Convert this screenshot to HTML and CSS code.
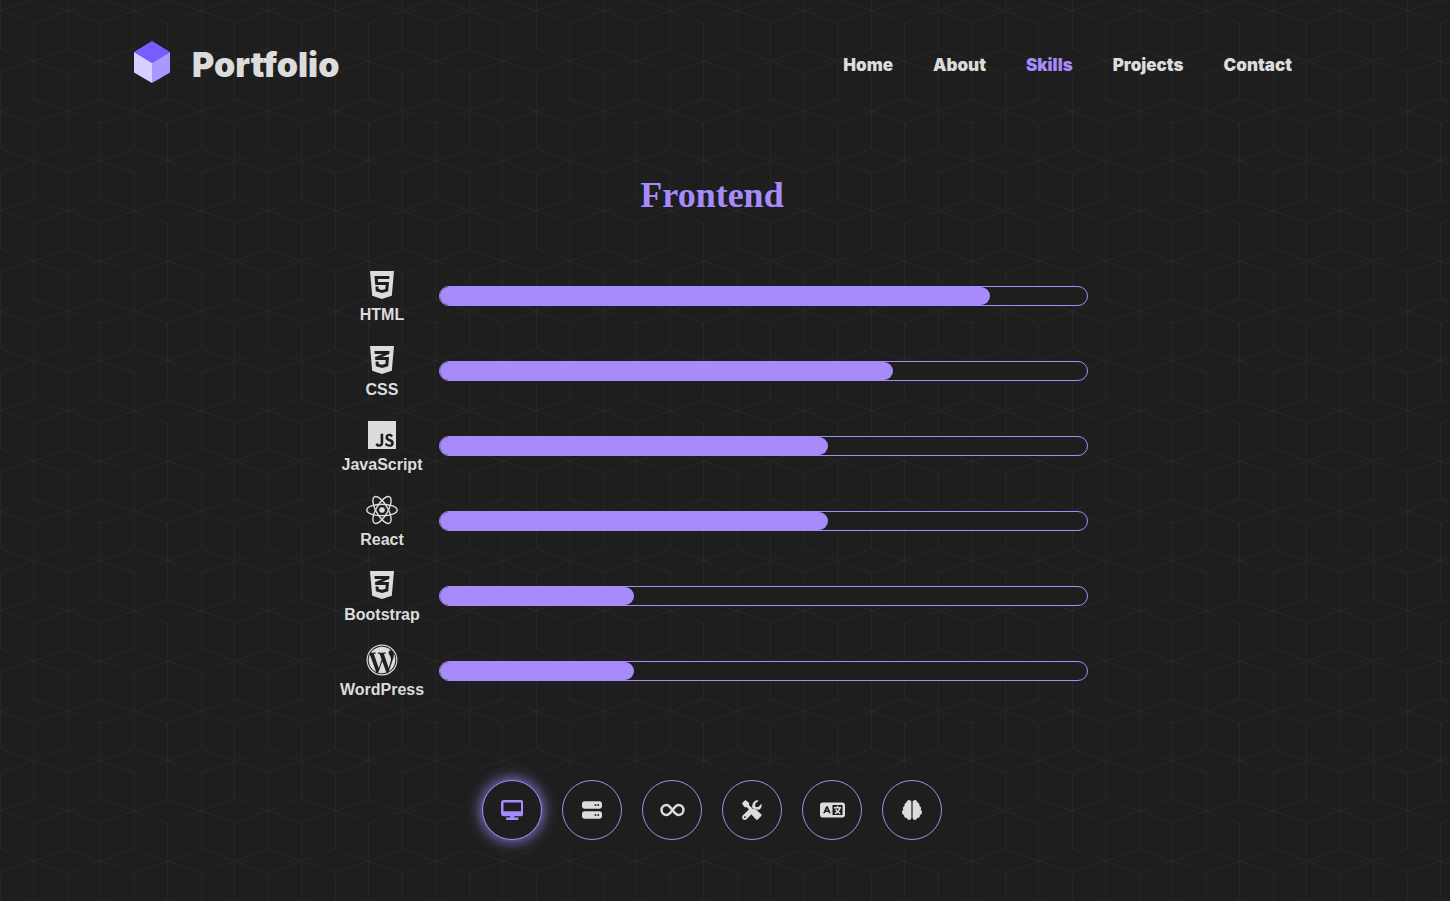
FILE: index.html
```html
<!DOCTYPE html>
<html lang="en">
<head>
<meta charset="utf-8">
<meta name="viewport" content="width=device-width, initial-scale=1">
<title>Portfolio</title>
<link rel="stylesheet" href="styles.css">
</head>
<body>
<header class="header">
  <a class="brand" href="#">
    <svg class="brand-mark" viewBox="0 0 36 42" aria-hidden="true">
      <path fill="#775dff" d="M18 0 36 11 18 22 0 11z"/>
      <path fill="#d8ceff" d="M0 11 18 22V42L0 31.500z"/>
      <path fill="#a998ff" d="M36 11 18 22V42L36 31.500z"/>
    </svg>
    <span>Portfolio</span>
  </a>
  <nav class="nav">
    <a href="#home">Home</a>
    <a href="#about">About</a>
    <a class="active" href="#skills">Skills</a>
    <a href="#projects">Projects</a>
    <a href="#contact">Contact</a>
  </nav>
</header>
<main class="main">
  <h1 class="title">Frontend</h1>
  <ul class="skills">
    <li class="skill">
      <div class="label"><svg viewBox="0 0 384 512" aria-hidden="true"><path d="M0 32l34.9 395.8L191.500 480l157.600-52.200L384 32H0zm308.200 127.900H124.400l4.100 49.400h175.600l-13.600 148.400-97.900 27v.3h-1.100l-98.700-27.300-6-75.800h47.700L138 320l53.500 14.500 53.700-14.500 6-62.200H84.300L71.500 112.200h241.100l-4.400 47.700z"/></svg><span>HTML</span></div>
      <div class="bar"><div class="fill" style="width:85%"></div></div>
    </li>
    <li class="skill">
      <div class="label"><svg viewBox="0 0 384 512" aria-hidden="true"><path d="M0 32l34.900 395.800L192 480l157.100-52.200L384 32H0zm313.100 80l-4.800 47.300L193 208.600l-.3.1h111.500l-12.800 146.600-98.200 28.700-98.800-29.200-6.400-73.900h48.900l3.200 38.300 52.600 13.300 54.700-15.400 3.700-61.600-166.300-.5v-.1l-.2.1-3.600-46.300L193.100 162l6.500-2.700H76.700L70.900 112h242.200z"/></svg><span>CSS</span></div>
      <div class="bar"><div class="fill" style="width:70%"></div></div>
    </li>
    <li class="skill">
      <div class="label"><svg viewBox="0 0 448 512" aria-hidden="true"><path d="M0 32v448h448V32H0zm243.800 349.400c0 43.600-25.600 63.500-62.900 63.500-33.700 0-53.200-17.400-63.200-38.500l34.300-20.700c6.600 11.700 12.600 21.600 27.100 21.600 13.800 0 22.600-5.400 22.600-26.500V237.700h42.100v143.700zm99.600 63.500c-39.100 0-64.400-18.600-76.700-43l34.300-19.800c9 14.700 20.800 25.600 41.500 25.600 17.400 0 28.600-8.700 28.600-20.800 0-14.400-11.400-19.500-30.700-28l-10.500-4.500c-30.400-12.900-50.500-29.200-50.500-63.500 0-31.600 24.100-55.600 61.600-55.600 26.800 0 46 9.300 59.800 33.700L368 290c-7.200-12.900-15-18-27.100-18-12.300 0-20.100 7.800-20.100 18 0 12.600 7.800 17.700 25.900 25.600l10.500 4.500c35.800 15.300 55.900 31 55.900 66.200 0 37.800-29.800 58.600-69.700 58.600z"/></svg><span>JavaScript</span></div>
      <div class="bar"><div class="fill" style="width:60%"></div></div>
    </li>
    <li class="skill">
      <div class="label"><svg viewBox="0 0 32 32" aria-hidden="true"><circle cx="16" cy="16" r="2.800"/><g fill="none" stroke="currentColor" stroke-width="1.400"><ellipse cx="16" cy="16" rx="15.200" ry="5.800"/><ellipse cx="16" cy="16" rx="15.200" ry="5.800" transform="rotate(60 16 16)"/><ellipse cx="16" cy="16" rx="15.200" ry="5.800" transform="rotate(120 16 16)"/></g></svg><span>React</span></div>
      <div class="bar"><div class="fill" style="width:60%"></div></div>
    </li>
    <li class="skill">
      <div class="label"><svg viewBox="0 0 384 512" aria-hidden="true"><path d="M0 32l34.900 395.800L192 480l157.100-52.200L384 32H0zm313.100 80l-4.800 47.300L193 208.600l-.3.1h111.500l-12.800 146.600-98.200 28.700-98.800-29.200-6.400-73.900h48.900l3.200 38.300 52.600 13.300 54.700-15.400 3.700-61.600-166.300-.5v-.1l-.2.1-3.600-46.300L193.100 162l6.500-2.700H76.700L70.900 112h242.200z"/></svg><span>Bootstrap</span></div>
      <div class="bar"><div class="fill" style="width:30%"></div></div>
    </li>
    <li class="skill">
      <div class="label"><svg viewBox="0 0 512 512" aria-hidden="true"><path d="M61.700 169.400l101.500 278C92.200 413 43.300 340.200 43.300 256c0-30.900 6.600-60.100 18.400-86.600zm337.900 75.900c0-26.300-9.400-44.500-17.500-58.700-10.800-17.500-20.900-32.400-20.900-49.900 0-19.600 14.800-37.800 35.700-37.800.9 0 1.800.1 2.800.2-37.900-34.700-88.300-55.900-143.700-55.900-74.300 0-139.700 38.100-177.800 95.900 5 .2 9.700.3 13.700.3 22.200 0 56.700-2.700 56.700-2.700 11.500-.7 12.800 16.200 1.400 17.500 0 0-11.500 1.300-24.300 2l77.500 230.400L249.800 247l-33.100-90.800c-11.500-.7-22.300-2-22.300-2-11.500-.7-10.100-18.200 1.300-17.500 0 0 35.100 2.700 56 2.700 22.200 0 56.700-2.700 56.700-2.700 11.500-.7 12.800 16.200 1.400 17.500 0 0-11.500 1.300-24.300 2l76.900 228.700 21.200-70.900c9-29.400 16-50.500 16-68.700zm-139.900 29.300l-63.800 185.500c19.100 5.600 39.200 8.700 60.100 8.700 24.800 0 48.500-4.300 70.600-12.100-.6-.9-1.100-1.900-1.500-2.900l-65.400-179.200zm183-120.700c.9 6.800 1.400 14 1.400 21.900 0 21.600-4 45.800-16.200 76.200l-65 187.900C426.200 403 468.700 334.500 468.700 256c0-37-9.400-71.800-26-102.100z"/><circle cx="256" cy="256" r="238" fill="none" stroke="currentColor" stroke-width="18"/></svg><span>WordPress</span></div>
      <div class="bar"><div class="fill" style="width:30%"></div></div>
    </li>
  </ul>
  <div class="tabs">
    <button class="tab active" aria-label="Frontend"><svg viewBox="0 0 576 512"><path d="M64 0C29 0 0 29 0 64v288c0 35 29 64 64 64h176l-11 32h-69c-18 0-32 14-32 32s14 32 32 32h256c18 0 32-14 32-32s-14-32-32-32h-69l-11-32h176c35 0 64-29 64-64V64c0-35-29-64-64-64zm0 64h448v224H64z"/></svg></button>
    <button class="tab" aria-label="Backend"><svg viewBox="0 0 512 512"><path fill-rule="evenodd" d="M64 32C29 32 0 61 0 96v64c0 35 29 64 64 64h384c35 0 64-29 64-64V96c0-35-29-64-64-64zm280 72a24 24 0 1 1 0 48 24 24 0 0 1 0-48m72 0a24 24 0 1 1 0 48 24 24 0 0 1 0-48M64 288c-35 0-64 29-64 64v64c0 35 29 64 64 64h384c35 0 64-29 64-64v-64c0-35-29-64-64-64zm280 72a24 24 0 1 1 0 48 24 24 0 0 1 0-48m72 0a24 24 0 1 1 0 48 24 24 0 0 1 0-48"/></svg></button>
    <button class="tab" aria-label="DevOps"><svg viewBox="0 0 640 512"><path fill="none" stroke="currentColor" stroke-width="64" stroke-linejoin="round" d="M320 256C270 190 230 128 168 128a128 128 0 0 0 0 256c62 0 102-62 152-128s90-128 152-128a128 128 0 0 1 0 256c-62 0-102-62-152-128z"/></svg></button>
    <button class="tab" aria-label="Tools"><svg viewBox="0 0 512 512"><path d="M79 5 5 79q-8 9-2 19l55 75q6 10 18 10h48l109 109c-14 28-9 64 15 87l112 117q23 20 46 0l85-85q20-23 0-46L375 254c-23-24-59-29-87-15L179 130V82q0-12-10-18L94 4q-8-6-15 1z"/><path d="M20 396 212 204l59 60-20 22c-26 34-21 61-12 86L116 492c-64 56-151-31-96-96zm55 17a24 24 0 1 0 0 49 24 24 0 0 0 0-49zM498 106q14 46-10 90c-25 43-65 59-104 55-30-27-60-34-91-27l-32-31c-5-65 13-127 70-168 23-19 49-24 79-17q13 5 5 15l-77 73v69l13 13h69l62-72q10-9 16 0z" fill-rule="evenodd"/></svg></button>
    <button class="tab" aria-label="Languages"><svg viewBox="0 0 640 512"><path fill-rule="evenodd" d="M64 64C29 64 0 93 0 128v256c0 35 29 64 64 64h512c35 0 64-29 64-64V128c0-35-29-64-64-64zm256 64h256v256H320zM158 158h40l78 182h-44l-14-34h-80l-14 34H80zm20 58-20 50h40z"/><path fill="none" stroke="currentColor" stroke-width="38" d="M448 150v48M358 198h180M510 198c-15 70-60 120-130 150M398 238c25 50 65 82 120 110"/></svg></button>
    <button class="tab" aria-label="Soft skills"><svg viewBox="0 0 512 512"><path d="M184 0c31 0 56 25 56 56v400c0 31-25 56-56 56-29 0-53-22-56-50-42 9-80-25-72-69-36-14-58-49-56-81 1-29 16-50 34-62-24-37-7-83 30-97-8-40 13-75 48-83 3-39 38-70 72-70zm144 0c-31 0-56 25-56 56v400c0 31 25 56 56 56 29 0 53-22 56-50 42 9 80-25 72-69 36-14 58-49 56-81-1-29-16-50-34-62 24-37 7-83-30-97 8-40-13-75-48-83-3-39-38-70-72-70z"/></svg></button>
  </div>
</main>
</body>
</html>
```
FILE: styles.css
```css
* { box-sizing: border-box; }

body {
  margin: 0;
  padding: 0 26px 0 0;
  min-height: 100vh;
  color: #dcdcdc;
  font-family: "Liberation Sans", Arial, sans-serif;
  background: #1e1e1e url("data:image/svg+xml,%3Csvg xmlns='http://www.w3.org/2000/svg' width='67' height='100'%3E%3Cpath fill='none' stroke='%23262626' d='M.5 11 33.500-1 67.500 11 33.500 23 .5 11M.5 0V49L33.500 61 .5 73V100M33.500 23V99M67.500 49 33.500 61 67.500 73M.5 111 33.500 99 67.500 111'/%3E%3C/svg%3E");
}

.header {
  display: flex;
  justify-content: space-between;
  align-items: center;
  width: 82%;
  max-width: 1160px;
  margin: 0 auto;
  padding: 41px 0 0 2px;
}

.brand {
  display: flex;
  align-items: flex-start;
  gap: 22px;
  color: inherit;
  text-decoration: none;
  font: 900 34px/48px Inter, sans-serif;
}

.brand-mark { width: 36px; height: 42px; }

.nav {
  display: flex;
  gap: 40px;
  font: 900 17px/24px Inter, sans-serif;
}

.nav a { color: inherit; text-decoration: none; }
.nav .active { color: #a78bfa; }

.main {
  display: flex;
  flex-direction: column;
  align-items: center;
  padding-top: 86px;
}

.title {
  margin: 0;
  color: #a78bfa;
  font: bold 36px/40px "Liberation Serif", serif;
}

.skills {
  display: flex;
  flex-direction: column;
  gap: 16px;
  width: 53%;
  max-width: 752px;
  margin: 51px 0 0;
  padding: 0;
  list-style: none;
}

.skill {
  display: grid;
  grid-template-columns: 92px 1fr;
  align-items: center;
  gap: 11px;
}

.label {
  display: flex;
  flex-direction: column;
  align-items: center;
  gap: 3px;
  padding-top: 3px;
  font-weight: bold;
  font-size: 16px;
  line-height: 21px;
}

.label svg { height: 32px; fill: currentColor; }

.bar {
  height: 20px;
  border: 1px solid #a78bfa;
  border-radius: 10px;
  background: #1e1e1e;
  overflow: hidden;
}

.fill {
  height: 100%;
  border-radius: 0 9px 9px 0;
  background: #a78bfa;
}

.tabs {
  display: flex;
  justify-content: center;
  gap: 20px;
  margin-top: 70px;
  padding: 10px 20px;
  background: #1e1e1e;
}

.tab {
  display: grid;
  place-items: center;
  width: 60px;
  height: 60px;
  padding: 0;
  border: 1px solid #a78bfa;
  border-radius: 50%;
  color: #dcdcdc;
  background: #1e1e1e;
}

.tab svg { height: 20px; fill: currentColor; }

.tab.active {
  color: #a78bfa;
  box-shadow: 0 0 15px #a78bfa;
}
```
